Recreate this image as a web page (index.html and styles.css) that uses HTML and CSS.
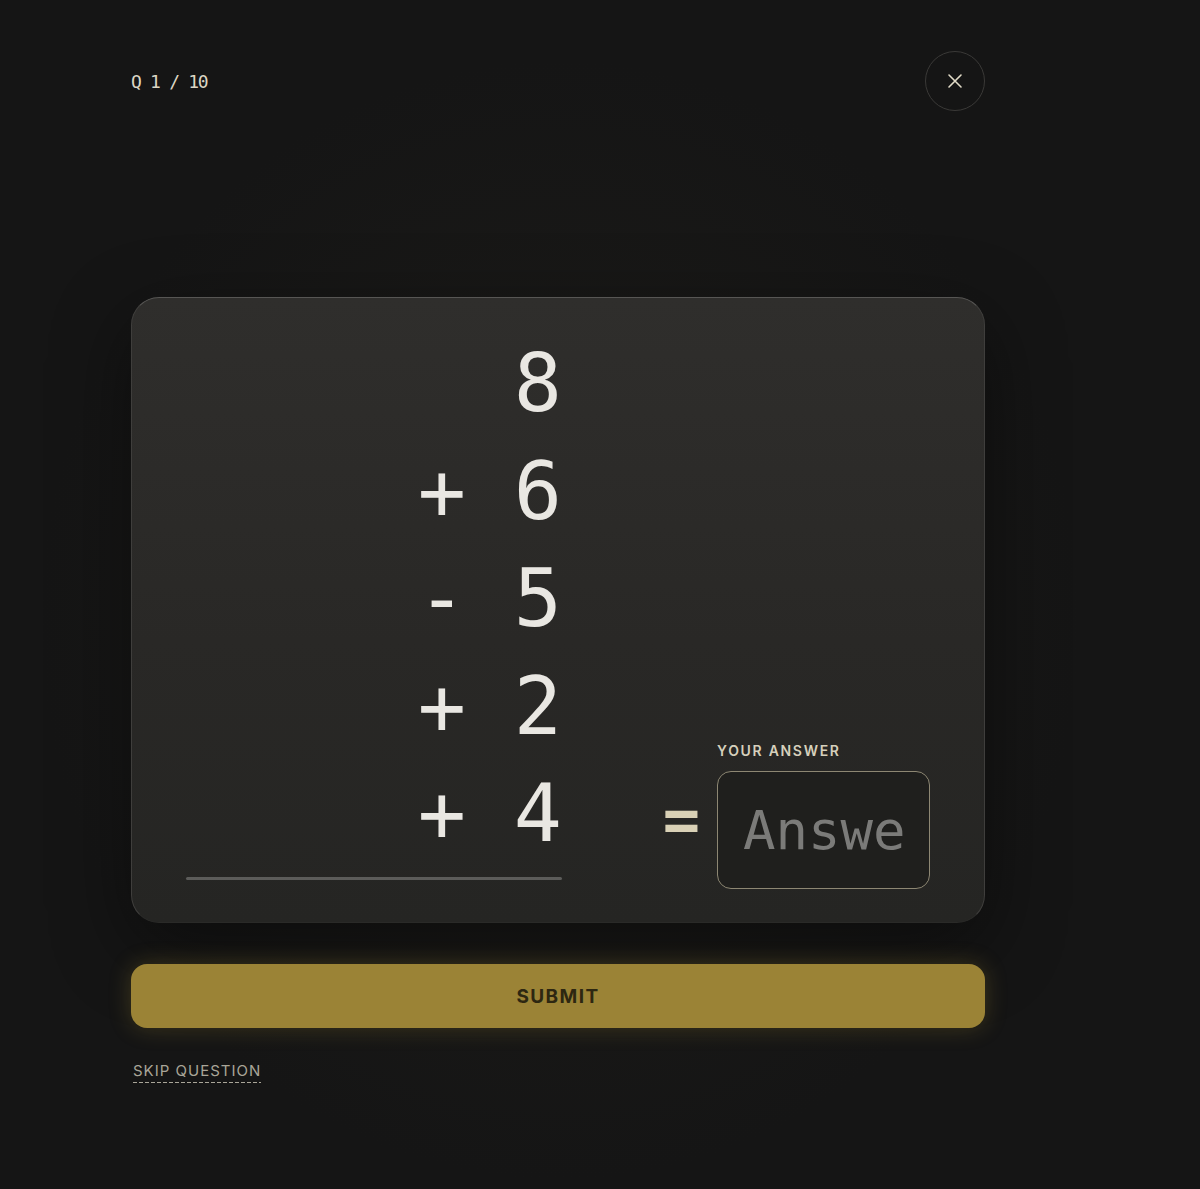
FILE: index.html
```html
<!DOCTYPE html>
<html lang="en">
<head>
  <meta charset="UTF-8">
  <meta name="viewport" content="width=device-width, initial-scale=1.0">
  <title>Mental Math</title>
  <link rel="stylesheet" href="styles.css">
</head>
<body>
  <main class="quiz">
    <header class="quiz-header">
      <span class="counter">Q 1 / 10</span>
      <button class="close-btn" aria-label="Close">
        <svg width="16" height="16" viewBox="0 0 16 16" fill="none">
          <path d="M2 2 L14 14 M14 2 L2 14" stroke="currentColor" stroke-width="1.6" stroke-linecap="round"/>
        </svg>
      </button>
    </header>

    <section class="card">
      <div class="problem">
        <div class="row"><span class="sign"></span><span class="digit">8</span></div>
        <div class="row"><span class="sign">+</span><span class="digit">6</span></div>
        <div class="row"><span class="sign">-</span><span class="digit">5</span></div>
        <div class="row"><span class="sign">+</span><span class="digit">2</span></div>
        <div class="row"><span class="sign">+</span><span class="digit">4</span></div>
        <div class="rule"></div>
      </div>

      <div class="answer-area">
        <span class="equals">=</span>
        <label class="answer-field">
          <span class="answer-label">YOUR ANSWER</span>
          <input type="text" class="answer-input" placeholder="Answer">
        </label>
      </div>
    </section>

    <button class="submit-btn">SUBMIT</button>
    <a href="#" class="skip-link">SKIP QUESTION</a>
  </main>
</body>
</html>
```

FILE: styles.css
```css
body {
  margin: 0;
  min-height: 100vh;
  background: radial-gradient(ellipse 520px 560px at 560px 620px, #1d1c19 0%, #151515 100%);
  background-color: #151515;
  color: #e8e6e1;
  font-family: "Inter", "Liberation Sans", sans-serif;
}

.quiz {
  width: 854px;
  margin-left: 131px;
  padding-top: 51px;
}

.quiz-header {
  display: flex;
  justify-content: space-between;
  align-items: center;
  height: 60px;
}

.counter {
  font-family: "DejaVu Sans Mono", monospace;
  font-size: 18px;
  letter-spacing: -1.3px;
  color: #dcd6c4;
}

.close-btn {
  width: 60px;
  height: 60px;
  border-radius: 50%;
  border: 1px solid #3a3937;
  background: transparent;
  color: #e2dcc8;
  display: flex;
  align-items: center;
  justify-content: center;
  padding: 0;
  cursor: pointer;
}

.card {
  margin-top: 186px;
  height: 626px;
  box-sizing: border-box;
  padding: 32px 54px 33px 54px;
  display: flex;
  align-items: flex-end;
  border-radius: 28px;
  border: 1px solid;
  border-color: #575654 #3f3e3c #2a2a28 #3f3e3c;
  background: linear-gradient(180deg, #2f2e2c 0%, #292826 55%, #252523 100%);
  box-shadow: 0 24px 80px rgba(0, 0, 0, 0.45);
}

/* column of numbers */
.problem {
  width: 376px;
  align-self: flex-start;
}

.row {
  display: flex;
  justify-content: flex-end;
  gap: 48px;
  height: 107.5px;
  align-items: center;
  font-family: "DejaVu Sans Mono", monospace;
  font-size: 80px;
  color: #e9e7e2;
}

.sign {
  width: 48px;
  text-align: center;
}

.rule {
  height: 3px;
  margin-top: 9px;
  border-radius: 2px;
  background: #5c5c5a;
}

.answer-area {
  margin-left: auto;
  display: flex;
  align-items: flex-end;
  gap: 17px;
}

.equals {
  font-family: "DejaVu Sans Mono", monospace;
  font-weight: bold;
  font-size: 62px;
  line-height: 1;
  color: #d9d1b6;
  margin-bottom: 38px;
}

.answer-field {
  display: flex;
  flex-direction: column;
  gap: 13px;
}

.answer-label {
  font-size: 14px;
  font-weight: 600;
  letter-spacing: 1.7px;
  color: #d6d0bc;
  line-height: 1;
}

.answer-input {
  width: 213px;
  height: 118px;
  box-sizing: border-box;
  padding: 0 24px 0 25px;
  border: 1.5px solid #8d8773;
  border-radius: 14px;
  background: #1f1f1d;
  color: #e8e6e1;
  font-family: "DejaVu Sans Mono", monospace;
  font-size: 54px;
  outline: none;
}

.answer-input::placeholder {
  color: #7b7b79;
}

.submit-btn {
  display: block;
  width: 100%;
  height: 64px;
  margin-top: 41px;
  border: none;
  border-radius: 16px;
  background: #9b8336;
  box-shadow: 0 0 22px rgba(160, 135, 50, 0.3);
  color: #2d2711;
  font-family: "Inter", "Liberation Sans", sans-serif;
  font-size: 19px;
  font-weight: 700;
  letter-spacing: 1.4px;
  cursor: pointer;
}

/* dashed underline drawn as a repeating gradient so the dashes are longer */
.skip-link {
  display: inline-block;
  margin-top: 33px;
  margin-left: 2px;
  padding-bottom: 3px;
  font-size: 15px;
  letter-spacing: 1px;
  color: #a9a598;
  text-decoration: none;
  background: repeating-linear-gradient(90deg, #a9a598 0 4px, transparent 4px 6px) left bottom / 100% 1.5px no-repeat;
}
```
